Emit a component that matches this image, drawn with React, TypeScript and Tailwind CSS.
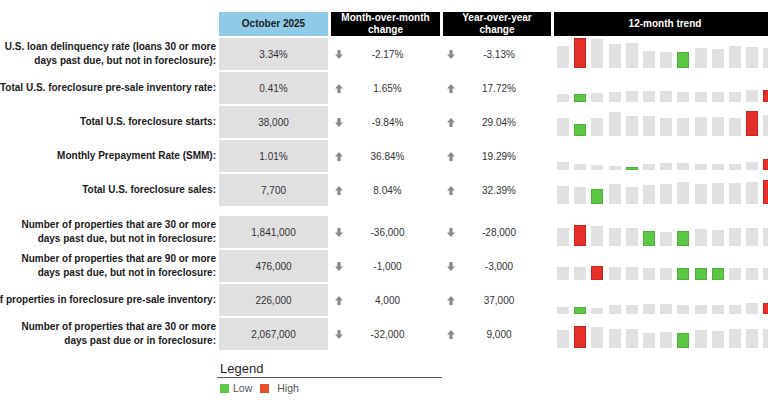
type Bar = [number, ("g" | "r")?];

type Row = {
  label: string[];
  value: string;
  mom: string;
  momUp: boolean;
  yoy: string;
  yoyUp: boolean;
  bars: Bar[];
};

const rows: Row[] = [
  {
    label: ["U.S. loan delinquency rate (loans 30 or more", "days past due, but not in foreclosure):"],
    value: "3.34%", mom: "-2.17%", momUp: false, yoy: "-3.13%", yoyUp: false,
    bars: [[22], [30, "r"], [29], [24], [25], [17], [16], [16, "g"], [20], [19], [22], [21], [20]],
  },
  {
    label: ["Total U.S. foreclosure pre-sale inventory rate:"],
    value: "0.41%", mom: "1.65%", momUp: true, yoy: "17.72%", yoyUp: true,
    bars: [[8], [8, "g"], [9], [10], [11], [11], [11], [10], [10], [10], [10], [12], [12, "r"]],
  },
  {
    label: ["Total U.S. foreclosure starts:"],
    value: "38,000", mom: "-9.84%", momUp: false, yoy: "29.04%", yoyUp: true,
    bars: [[18], [12, "g"], [18], [24], [20], [20], [18], [18], [19], [19], [18], [25, "r"], [21]],
  },
  {
    label: ["Monthly Prepayment Rate (SMM):"],
    value: "1.01%", mom: "36.84%", momUp: true, yoy: "19.29%", yoyUp: true,
    bars: [[8], [6], [5], [4], [3, "g"], [6], [7], [7], [6], [6], [6], [8], [11, "r"]],
  },
  {
    label: ["Total U.S. foreclosure sales:"],
    value: "7,700", mom: "8.04%", momUp: true, yoy: "32.39%", yoyUp: true,
    bars: [[18], [17], [15, "g"], [20], [17], [19], [20], [22], [20], [21], [21], [22], [24, "r"]],
  },
];

const rows2: Row[] = [
  {
    label: ["Number of properties that are 30 or more", "days past due, but not in foreclosure:"],
    value: "1,841,000", mom: "-36,000", momUp: false, yoy: "-28,000", yoyUp: false,
    bars: [[18], [21, "r"], [20], [18], [18], [15, "g"], [14], [15, "g"], [17], [16], [18], [18], [18]],
  },
  {
    label: ["Number of properties that are 90 or more", "days past due, but not in foreclosure:"],
    value: "476,000", mom: "-1,000", momUp: false, yoy: "-3,000", yoyUp: false,
    bars: [[13], [13], [14, "r"], [13], [13], [12], [12], [12, "g"], [12, "g"], [12, "g"], [12], [12], [12]],
  },
  {
    label: ["Number of properties in foreclosure pre-sale inventory:"],
    value: "226,000", mom: "4,000", momUp: true, yoy: "37,000", yoyUp: true,
    bars: [[7], [7, "g"], [6], [9], [9], [10], [10], [9], [9], [9], [9], [11], [11, "r"]],
  },
  {
    label: ["Number of properties that are 30 or more", "days past due or in foreclosure:"],
    value: "2,067,000", mom: "-32,000", momUp: false, yoy: "9,000", yoyUp: true,
    bars: [[18], [22, "r"], [21], [19], [19], [15], [16], [15, "g"], [18], [17], [19], [19], [19]],
  },
];

const cols = "grid grid-cols-[276px_109px_109px_108px_222px] gap-x-[3px]";

const Arrow = ({ up }: { up: boolean }) => (
  <svg width="8" height="9" viewBox="0 0 10 11" className={up ? "" : "rotate-180"}>
    <path d="M5 0 L10 5.5 L7 5.5 L7 11 L3 11 L3 5.5 L0 5.5 Z" fill="#8a8a8a" />
  </svg>
);

const Change = ({ text, up }: { text: string; up: boolean }) => (
  <div className="flex items-center">
    <div className="w-[16px] pl-[4px] flex items-center">
      <Arrow up={up} />
    </div>
    <div className="flex-1 text-center">{text}</div>
    <div className="w-[12px]" />
  </div>
);

const TableRow = ({ row }: { row: Row }) => (
  <div className={`${cols} h-[32px] text-[10px] text-[#333]`}>
    <div className="flex items-center justify-end text-right font-bold text-[#1a1a1a] leading-[14px] whitespace-nowrap">
      <div>
        {row.label.map((l) => (
          <div key={l}>{l}</div>
        ))}
      </div>
    </div>
    <div className="bg-[#e0e0e0] flex items-center justify-center">{row.value}</div>
    <Change text={row.mom} up={row.momUp} />
    <Change text={row.yoy} up={row.yoyUp} />
    <div className="flex items-end gap-[5.2px] pl-[3px] pb-[2px]">
      {row.bars.map(([h, c], i) => (
        <div
          key={i}
          className={`w-[12px] shrink-0 ${
            c === "r"
              ? "bg-[#e5302a] border border-[#c9241f]"
              : c === "g"
              ? "bg-[#5cc744] border border-[#4fb13a]"
              : "bg-[#e1e1e1]"
          }`}
          style={{ height: h }}
        />
      ))}
    </div>
  </div>
);

export default function App() {
  return (
    <div className="w-[768px] h-[403px] overflow-hidden bg-white font-['Liberation_Sans',Arial,sans-serif]">
      <div className="ml-[-60px] pt-[12px] flex flex-col gap-[2px]">
        <div className={`${cols} h-[24px] text-[10px] font-bold leading-[12px]`}>
          <div />
          <div className="bg-[#8fcbe9] text-[#1a1a1a] flex items-center justify-center">October 2025</div>
          <div className="bg-black text-white flex items-center justify-center text-center">
            Month-over-month
            <br />
            change
          </div>
          <div className="bg-black text-white flex items-center justify-center text-center">
            Year-over-year
            <br />
            change
          </div>
          <div className="bg-black text-white flex items-center justify-center">12-month trend</div>
        </div>
        {rows.map((r) => (
          <TableRow key={r.value} row={r} />
        ))}
        <div className="h-[6px]" />
        {rows2.map((r) => (
          <TableRow key={r.value} row={r} />
        ))}
      </div>
      <div className="ml-[217px] w-[225px] mt-[11px]">
        <div className="text-[13px] leading-[16px] text-[#222] pl-[3px] border-b-[1.5px] border-[#555]">Legend</div>
        <div className="flex items-center mt-[5px] pl-[3px] text-[10.5px] text-[#555] leading-[11px]">
          <div className="w-[9px] h-[9px] bg-[#5cc744]" />
          <span className="ml-[4px]">Low</span>
          <div className="w-[9px] h-[9px] bg-[#e5502a] ml-[8px]" />
          <span className="ml-[8px]">High</span>
        </div>
      </div>
    </div>
  );
}
